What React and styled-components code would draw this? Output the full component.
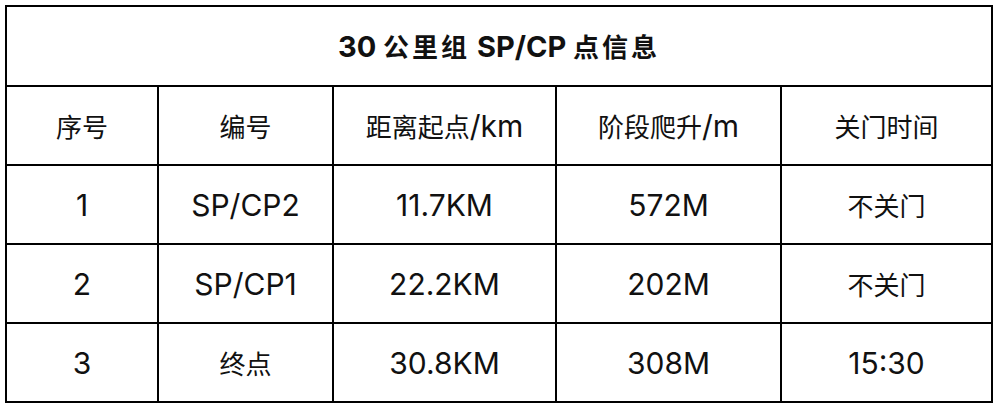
import React from "react";
import styled, { createGlobalStyle } from "styled-components";

const GlobalStyle = createGlobalStyle`
  html, body { margin: 0; padding: 0; background: #fff; }
  body { font-family: Inter, "Noto Sans CJK SC", sans-serif; color: #111; }
`;

const Page = styled.div`
  padding: 5px;
`;

const Table = styled.table`
  border-collapse: separate;
  border-spacing: 0;
  border-left: 2px solid #000;
  border-top: 2px solid #000;
  table-layout: fixed;
  width: 988px;
`;

const Cell = styled.td`
  border-right: 2px solid #000;
  border-bottom: 2px solid #000;
  text-align: center;
  vertical-align: middle;
  padding: 0;
  height: 79px;
  font-size: 30px;
  font-weight: 400;
  line-height: 1;
  color: #111;
  box-sizing: border-box;
  white-space: nowrap;
`;

const TitleCell = styled(Cell)`
  height: 80px;
  font-size: 29px;
  font-weight: 700;
`;

const HeadCell = styled(Cell).attrs({ as: "th" })`
  font-weight: 400;
`;

const Han = styled.span`
  font-family: "Noto Sans CJK SC", sans-serif;
  font-size: ${(p) => p.$size}px;
  letter-spacing: ${(p) => p.$spacing || 0}px;
`;

const hanRe = /([\u3400-\u9fff]+)/;

function Mixed({ text, han = 26, spacing = 0 }) {
  return text.split(hanRe).map((part, i) =>
    hanRe.test(part) ? (
      <Han key={i} $size={han} $spacing={spacing}>
        {part}
      </Han>
    ) : (
      <React.Fragment key={i}>{part}</React.Fragment>
    )
  );
}

const widths = [152, 175, 223, 225, 211];
const head = ["序号", "编号", "距离起点/km", "阶段爬升/m", "关门时间"];
const rows = [
  ["1", "SP/CP2", "11.7KM", "572M", "不关门"],
  ["2", "SP/CP1", "22.2KM", "202M", "不关门"],
  ["3", "终点", "30.8KM", "308M", "15:30"],
];

export default function App() {
  return (
    <Page>
      <GlobalStyle />
      <Table>
        <colgroup>
          {widths.map((w, i) => (
            <col key={i} style={{ width: w }} />
          ))}
        </colgroup>
        <tbody>
          <tr>
            <TitleCell colSpan={5}>
              <Mixed text="30 公里组 SP/CP 点信息" han={26} spacing={3} />
            </TitleCell>
          </tr>
          <tr>
            {head.map((h) => (
              <HeadCell key={h}>
                <Mixed text={h} />
              </HeadCell>
            ))}
          </tr>
          {rows.map((r, i) => (
            <tr key={i}>
              {r.map((c, j) => (
                <Cell key={j}>
                  <Mixed text={c} />
                </Cell>
              ))}
            </tr>
          ))}
        </tbody>
      </Table>
    </Page>
  );
}
